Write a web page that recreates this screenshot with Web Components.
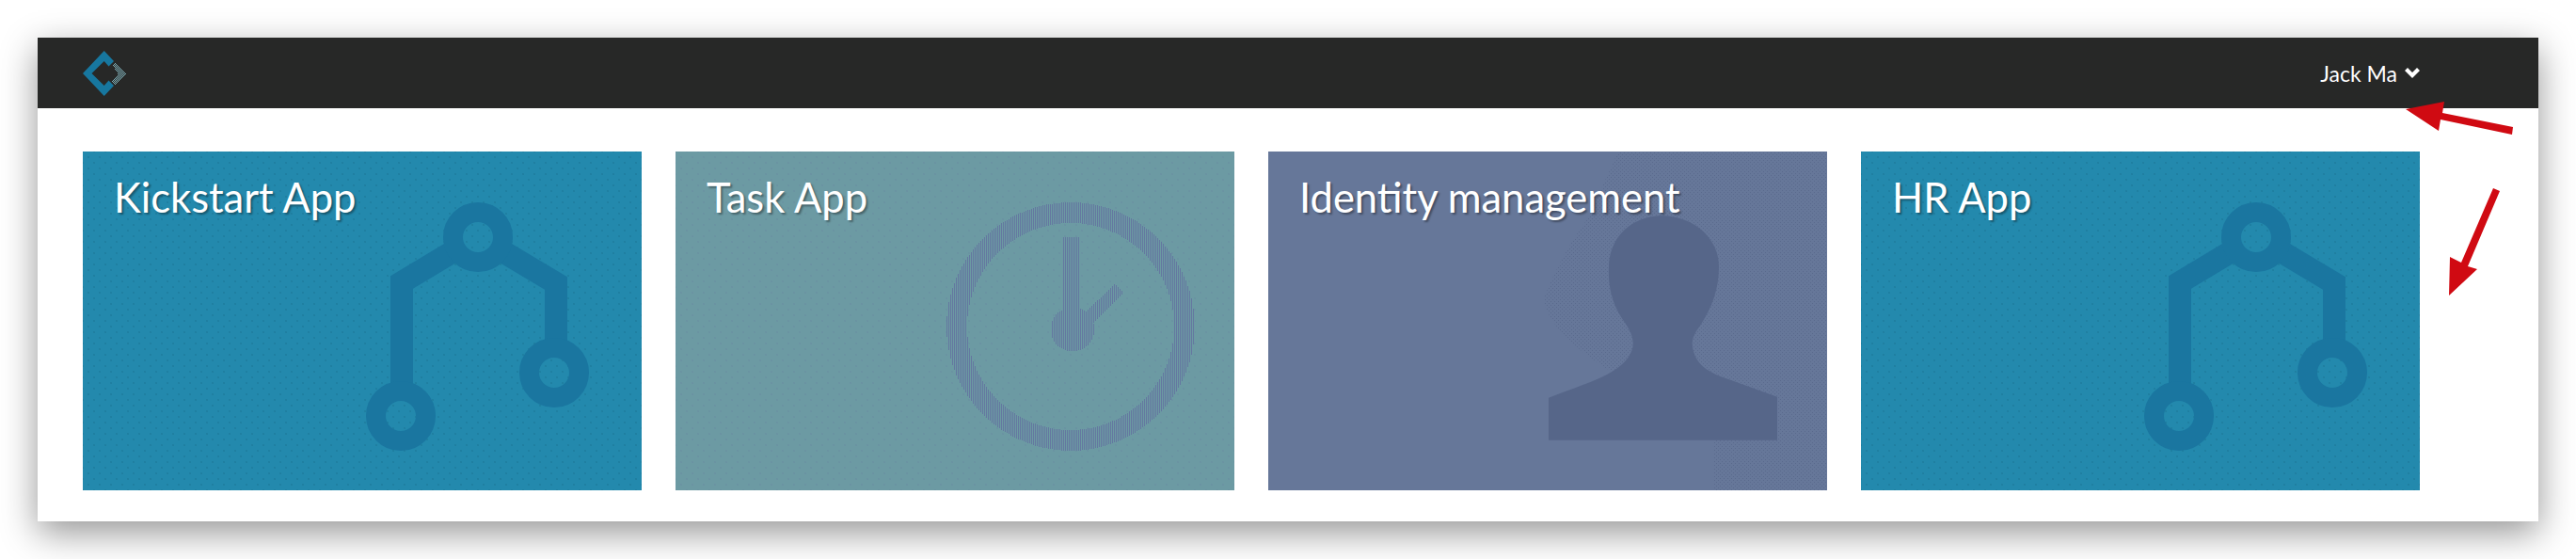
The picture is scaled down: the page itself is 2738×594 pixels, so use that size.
<!DOCTYPE html>
<html>
<head>
<meta charset="utf-8">
<title>Apps</title>
<style>
    html, body { margin: 0; background: #fff; }
    body { width: 2738px; height: 594px; overflow: hidden; position: relative; font-family: Lato, "Liberation Sans", sans-serif; }
</style>
</head>
<body>
<page-shot>
    <app-window>
        <top-bar slot="bar" user="Jack Ma"></top-bar>
        <app-tile style="--tile: #2389ad; --dot: rgba(20,100,130,.4)"><branch-icon slot="icon"></branch-icon>Kickstart App</app-tile>
        <app-tile style="--tile: #6c9aa3; --dot: rgba(100,120,160,.3)"><clock-icon slot="icon"></clock-icon>Task App</app-tile>
        <app-tile style="--tile: #667799; --dot: transparent"><person-icon slot="icon"></person-icon>Identity management</app-tile>
        <app-tile style="--tile: #2389ad; --dot: rgba(20,100,130,.4)"><branch-icon slot="icon"></branch-icon>HR App</app-tile>
    </app-window>
</page-shot>
<red-arrows></red-arrows>

<script>
class PageShot extends HTMLElement {
    constructor(){
        super();
        this.attachShadow({mode: 'open'});
        this.shadowRoot.innerHTML = `<style>:host { display: block; padding: 40px; }</style><slot></slot>`;
    }
}
window.customElements.define('page-shot', PageShot);

class AppWindow extends HTMLElement {
    constructor(){
        super();
        this.attachShadow({mode: 'open'});
        this.shadowRoot.innerHTML = `
            <style>
                :host { display: block; height: 514px; background: #fff; box-shadow: 0 12px 36px rgba(0,0,0,.42); }
                .tiles { display: flex; gap: 36px; padding: 46px 48px 0; }
            </style>
            <slot name="bar"></slot>
            <div class="tiles"><slot></slot></div>`;
    }
}
window.customElements.define('app-window', AppWindow);

class TopBar extends HTMLElement {
    constructor(){
        super();
        this.attachShadow({mode: 'open'});
        this.shadowRoot.innerHTML = `
            <style>
                :host { display: flex; align-items: center; justify-content: space-between; height: 75px; padding: 0 126px 0 48px; background: #272827; color: #fff; font: 400 23px Lato, sans-serif; }
                .user { display: flex; align-items: center; gap: 8px; }
                svg { display: block; }
            </style>
            <svg width="46" height="48" viewBox="88 57 46 48" shape-rendering="crispEdges">
                <defs>
                    <pattern id="mesh" width="2" height="2" patternUnits="userSpaceOnUse">
                        <rect width="2" height="2" fill="#272827"/>
                        <rect width="1" height="1" fill="#7fb0b8"/>
                        <rect x="1" y="1" width="1" height="1" fill="#7fb0b8"/>
                    </pattern>
                </defs>
                <polygon shape-rendering="auto" fill="#17779f" points="110.7,57 121,68 115.5,73.5 110.7,68 97.5,81 110.7,94 115.5,88.5 121,94 110.7,105 88,81"/>
                <polygon fill="url(#mesh)" points="122,69 134,81 122,93 119,90 125.7,81 119,72"/>
            </svg>
            <div class="user"><span id="name"></span>
                <svg width="16" height="11" viewBox="0 0 16 11"><polygon points="0,3 3,0 8,5 13,0 16,3 8,11" fill="#fff"/></svg>
            </div>`;
        this.shadowRoot.getElementById('name').textContent = this.getAttribute('user');
    }
}
window.customElements.define('top-bar', TopBar);

class AppTile extends HTMLElement {
    constructor(){
        super();
        this.attachShadow({mode: 'open'});
        this.shadowRoot.innerHTML = `
            <style>
                :host { display: block; position: relative; box-sizing: border-box; width: 594px; height: 360px; padding: 20px 33px; overflow: hidden; color: #fff;
                    background-color: var(--tile);
                    background-image: radial-gradient(circle, var(--dot) .6px, transparent .9px), radial-gradient(circle, var(--dot) .6px, transparent .9px);
                    background-size: 12px 12px;
                    background-position: 0 0, 6px 6px;
                    font: 400 43.5px/56px Lato, sans-serif; text-shadow: 2px 2px 2px rgba(0,0,0,.35); }
                ::slotted([slot=icon]) { position: absolute; inset: 0; }
            </style>
            <slot name="icon"></slot>
            <div style="position: relative"><slot></slot></div>`;
    }
}
window.customElements.define('app-tile', AppTile);

// icon coordinates are the page coordinates of the first tile of each kind
class BranchIcon extends HTMLElement {
    constructor(){
        super();
        this.attachShadow({mode: 'open'});
        this.shadowRoot.innerHTML = `
            <style>:host { display: block; } svg { display: block; }</style>
            <svg width="594" height="360" viewBox="88 161 594 360" fill="none" stroke="#1a76a0">
                <polyline points="427,420 427,300 482,267" stroke-width="24"/>
                <polyline points="534,267 591,301 591,375" stroke-width="24"/>
                <circle cx="508" cy="252" r="26.5" stroke-width="21"/>
                <circle cx="426" cy="442" r="26.5" stroke-width="21"/>
                <circle cx="589" cy="396" r="26.5" stroke-width="21"/>
            </svg>`;
    }
}
window.customElements.define('branch-icon', BranchIcon);

class ClockIcon extends HTMLElement {
    constructor(){
        super();
        this.attachShadow({mode: 'open'});
        this.shadowRoot.innerHTML = `
            <style>:host { display: block; } svg { display: block; }</style>
            <svg width="594" height="360" viewBox="718 161 594 360" shape-rendering="crispEdges">
                <defs>
                    <pattern id="dither" width="2" height="2" patternUnits="userSpaceOnUse">
                        <rect width="2" height="2" fill="#6c9aa3"/>
                        <rect width="1" height="2" fill="#6478a0"/>
                    </pattern>
                </defs>
                <circle cx="1138" cy="347" r="121" fill="none" stroke="url(#dither)" stroke-width="22"/>
                <rect x="1130" y="252" width="17" height="90" fill="url(#dither)"/>
                <circle cx="1140" cy="350" r="23.5" fill="url(#dither)"/>
                <polygon points="1185,302 1195,311 1160,345 1150,335" fill="url(#dither)"/>
            </svg>`;
    }
}
window.customElements.define('clock-icon', ClockIcon);

class PersonIcon extends HTMLElement {
    constructor(){
        super();
        this.attachShadow({mode: 'open'});
        this.shadowRoot.innerHTML = `
            <style>:host { display: block; } svg { display: block; }</style>
            <svg width="594" height="360" viewBox="1348 161 594 360">
                <defs>
                    <pattern id="dots" width="4" height="4" patternUnits="userSpaceOnUse" patternTransform="translate(1580 200)">
                        <rect width="1" height="1" fill="#5a6a8d"/>
                        <rect x="2" y="2" width="1" height="1" fill="#5a6a8d"/>
                    </pattern>
                </defs>
                <path fill="url(#dots)" d="M1687 233 C1667 260 1653 287 1641 317 C1643 343 1673 370 1713 395 L1822 400 L1822 521 L1942 521 L1942 161 L1720 161 Z"/>
                <path transform="translate(1580 200) scale(.3333)" fill="#566689" d="M198 668 C270 640 350 615 400 585 C450 555 470 520 467 490 C465 450 430 420 415 385 C395 340 388 300 390 250 C392 150 470 88 560 88 C660 88 741 160 741 250 C741 320 720 380 680 440 C660 465 650 490 660 520 C670 560 700 580 740 598 L927 665 L927 803 L198 803 Z"/>
            </svg>`;
    }
}
window.customElements.define('person-icon', PersonIcon);

class RedArrows extends HTMLElement {
    constructor(){
        super();
        this.attachShadow({mode: 'open'});
        this.shadowRoot.innerHTML = `
            <style>:host { display: block; position: absolute; inset: 0; pointer-events: none; } svg { display: block; }</style>
            <svg width="2738" height="594" viewBox="0 0 2738 594" fill="#d00a12">
                <polygon points="2557,116 2598,108 2596,120 2671,135 2670,143 2594,127 2592,139"/>
                <polygon points="2603,314 2604,273 2616,279 2650,200 2657,203 2623,283 2633,286"/>
            </svg>`;
    }
}
window.customElements.define('red-arrows', RedArrows);
</script>
</body>
</html>
